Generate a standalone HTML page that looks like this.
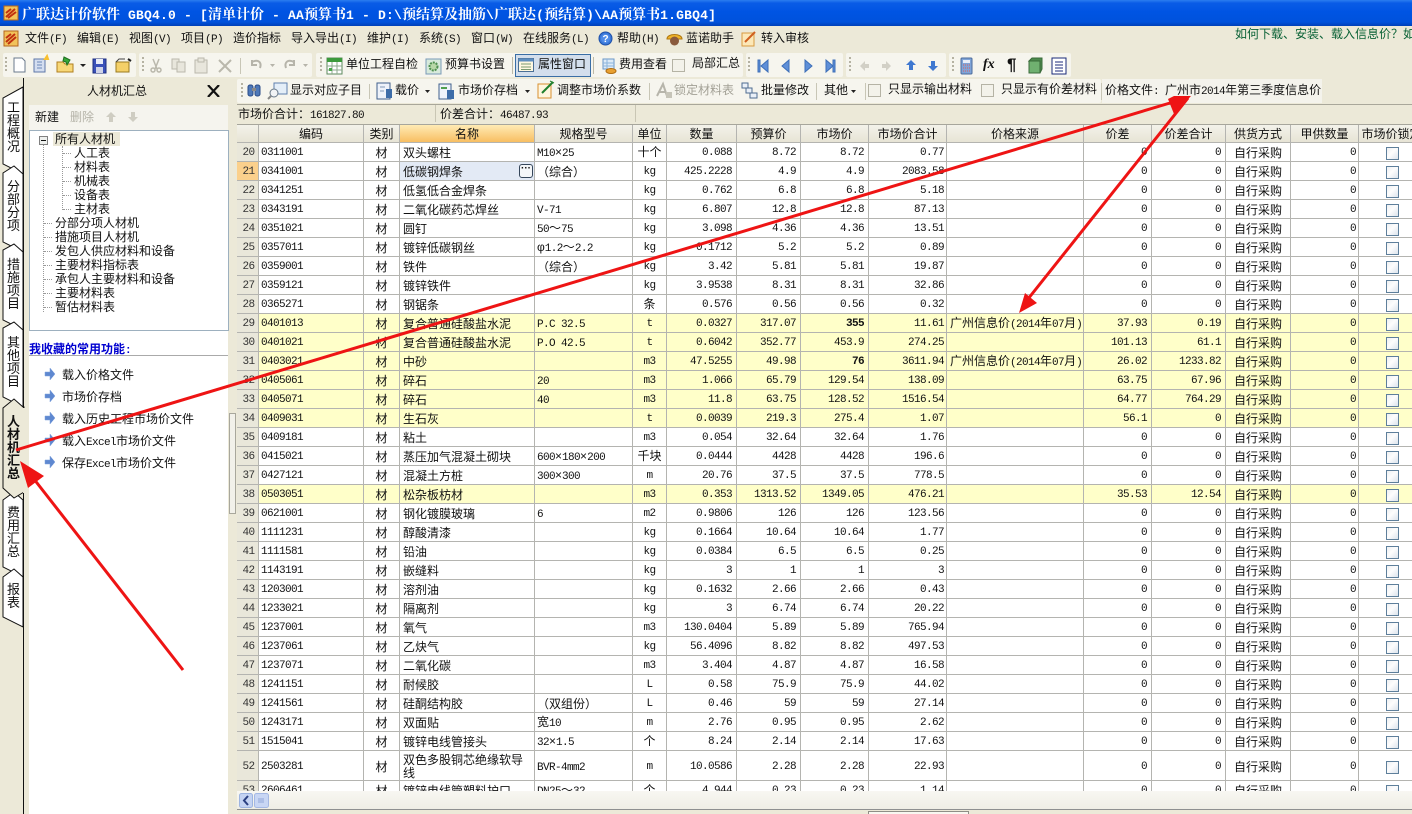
<!DOCTYPE html>
<html lang="zh"><head><meta charset="utf-8"><title>广联达计价软件</title>
<style>
html,body{margin:0;padding:0;width:1412px;height:814px;overflow:hidden;background:#ECE9D8}
body{position:relative;font:12px/14px "Liberation Sans","WenQuanYi Zen Hei","Noto Sans CJK SC",sans-serif;color:#111}
.a{position:absolute;white-space:nowrap}
i{font-style:normal}
.m{font-family:"Liberation Mono","WenQuanYi Zen Hei",monospace;font-size:11px;letter-spacing:-.6px}
.c{font-family:"Liberation Sans","WenQuanYi Zen Hei","Noto Sans CJK SC",sans-serif;font-size:12px;letter-spacing:0}
#title{left:0;top:0;width:1412px;height:26px;background:linear-gradient(#2B7DF0 0,#0A5CE6 3px,#0054E3 12px,#0052DC 22px,#0040B8 26px)}
#tt{left:22px;top:6px;color:#fff;font:bold 14px/16px "Noto Serif CJK SC",serif;letter-spacing:0}
#tt i{font-family:"Liberation Mono",monospace;font-size:13px;letter-spacing:.2px;white-space:pre}
.tb{background:#F6F5EE;border-radius:2px}
.grip{width:2px;background:repeating-linear-gradient(#B5B2A2 0 2px,transparent 2px 4px)}
.sep{width:1px;background:#BDBAA8}
.cb{width:11px;height:11px;border:1px solid #B5B3A5;background:#F3F2EA}
.g{color:#A3A196}
table{border-collapse:separate;border-spacing:0;table-layout:fixed;width:1182px}
#grid{left:237px;top:124px;width:1175px;height:667px;overflow:hidden;background:#fff;border-top:1px solid #A7A69C;box-sizing:border-box}
th,td{box-sizing:border-box;border-right:1px solid #B4B4B0;border-bottom:1px solid #B4B4B0;height:19px;padding:3px 3px 0;overflow:hidden;white-space:nowrap;font-weight:400;line-height:13px}
th{height:18px;background:linear-gradient(#F3F2EA,#E7E4D5);text-align:center;padding:2px 0 0}
th.s{background:linear-gradient(#FFEBB5,#F8BE62)}
td:nth-child(1){background:#E9E7DA;padding:3px 0 0 2px;font-family:"Liberation Mono",monospace;font-size:11px;letter-spacing:-.6px;text-align:center;color:#333}
td:nth-child(2),td:nth-child(7),td:nth-child(8),td:nth-child(9),td:nth-child(10),td:nth-child(12),td:nth-child(13),td:nth-child(15){font-family:"Liberation Mono",monospace;font-size:11px;letter-spacing:-.6px}
td:nth-child(7),td:nth-child(8),td:nth-child(9),td:nth-child(12),td:nth-child(13){text-align:right;padding-right:4px}
td:nth-child(10),td:nth-child(15){text-align:right;padding-right:2px}
td:nth-child(2){padding-left:2px}
td:nth-child(3){text-align:center}
td:nth-child(5){padding-left:2px}
td:nth-child(6){text-align:center;font-family:"Liberation Mono",monospace;font-size:11px;letter-spacing:-.6px}
td:nth-child(4){white-space:normal;padding-right:4px}
td:nth-child(14){text-align:left;padding-left:8px}
td:nth-child(16)::after{content:"";display:block;box-sizing:border-box;width:13px;height:13px;margin-left:24px;border:1px solid #5E7F9B;background:linear-gradient(135deg,#EEF0F2,#FDFDFD 45%,#DCE4EC)}
tr.y td:not(:first-child){background:#FFFFC9}
td.on{background:#E3EAF5!important;position:relative}
td.rs{background:#FBD08C!important}
b.x{font-family:"Liberation Mono",monospace;font-weight:bold}
#dots{position:absolute;left:119px;top:2px;width:14px;height:14px;box-sizing:border-box;border:1px solid #35465A;border-radius:3px;background:#F4F6F8;font:bold 10px/8px "Liberation Sans",sans-serif;text-align:center;letter-spacing:0}
.v{position:absolute;left:6px;width:15px;text-align:center;font-size:13px;line-height:13px;white-space:normal}
.tree{font-size:12px;line-height:14px}
.ln{position:absolute;border-left:1px dotted #999}
.lh{position:absolute;border-top:1px dotted #999;width:8px;height:0}
</style></head><body>

<div class="a" id="title"></div>
<svg class="a" style="left:3px;top:4px" width="16" height="18" viewBox="0 0 16 18"><rect x="1" y="2" width="14" height="14" fill="#F2C25A" stroke="#B5651D"/><path d="M3 13L12 5M5 14L13 8M3 9L8 5" stroke="#C03010" stroke-width="2" fill="none"/></svg>
<div class="a" id="tt">广联达计价软件<i> GBQ4.0 - [</i>清单计价<i> - AA</i>预算书<i>1 - D:\</i>预结算及抽筋<i>\</i>广联达<i>(</i>预结算<i>)\AA</i>预算书<i>1.GBQ4]</i></div>

<!-- menu -->
<svg class="a" style="left:3px;top:30px" width="16" height="17" viewBox="0 0 16 17"><rect x="1" y="1" width="14" height="15" fill="#F2C25A" stroke="#B5651D"/><path d="M3 12L12 4M5 14L13 7M3 8L8 4" stroke="#C03010" stroke-width="2" fill="none"/></svg>
<span class="a" style="left:25px;top:31px">文件<i class="m">(F)</i></span>
<span class="a" style="left:77px;top:31px">编辑<i class="m">(E)</i></span>
<span class="a" style="left:129px;top:31px">视图<i class="m">(V)</i></span>
<span class="a" style="left:181px;top:31px">项目<i class="m">(P)</i></span>
<span class="a" style="left:233px;top:31px">造价指标</span>
<span class="a" style="left:291px;top:31px">导入导出<i class="m">(I)</i></span>
<span class="a" style="left:367px;top:31px">维护<i class="m">(I)</i></span>
<span class="a" style="left:419px;top:31px">系统<i class="m">(S)</i></span>
<span class="a" style="left:471px;top:31px">窗口<i class="m">(W)</i></span>
<span class="a" style="left:523px;top:31px">在线服务<i class="m">(L)</i></span>
<svg class="a" style="left:598px;top:31px" width="15" height="15" viewBox="0 0 15 15"><circle cx="7.5" cy="7.5" r="6.5" fill="#3A78D8" stroke="#1C4FA8"/><circle cx="7.5" cy="7.5" r="4.5" fill="#4F8CE8"/><text x="7.5" y="11" font-size="10" font-weight="bold" fill="#fff" text-anchor="middle" font-family="Liberation Sans">?</text></svg>
<span class="a" style="left:617px;top:31px">帮助<i class="m">(H)</i></span>
<svg class="a" style="left:666px;top:30px" width="17" height="17" viewBox="0 0 17 17"><path d="M1 9C1 3 16 3 16 9Z" fill="#F0B428" stroke="#B07810"/><circle cx="8.5" cy="11" r="4.5" fill="#8A5A3C"/></svg>
<span class="a" style="left:686px;top:31px">蓝诺助手</span>
<svg class="a" style="left:741px;top:30px" width="16" height="17" viewBox="0 0 16 17"><rect x="1" y="3" width="12" height="13" fill="#FCE8B8" stroke="#D89A40"/><path d="M4 12L14 2" stroke="#D06020" stroke-width="2"/></svg>
<span class="a" style="left:761px;top:31px">转入审核</span>
<span class="a" style="left:1235px;top:27px;color:#0A6236">如何下载、安装、载入信息价？如</span>

<!-- toolbar 1 -->
<div class="a tb" style="left:3px;top:53px;width:133px;height:24px"></div>
<div class="a tb" style="left:139px;top:53px;width:173px;height:24px"></div>
<div class="a tb" style="left:316px;top:53px;width:427px;height:24px"></div>
<div class="a tb" style="left:746px;top:53px;width:97px;height:24px"></div>
<div class="a tb" style="left:846px;top:53px;width:100px;height:24px"></div>
<div class="a tb" style="left:949px;top:53px;width:122px;height:24px"></div>
<div class="a grip" style="left:5px;top:57px;height:16px"></div>
<div class="a grip" style="left:142px;top:57px;height:16px"></div>
<div class="a grip" style="left:320px;top:57px;height:16px"></div>
<div class="a grip" style="left:748px;top:57px;height:16px"></div>
<div class="a grip" style="left:849px;top:57px;height:16px"></div>
<div class="a grip" style="left:952px;top:57px;height:16px"></div>
<svg class="a" style="left:0;top:52px" width="1072" height="26" viewBox="0 0 1072 26">
<path d="M14 6h8l3 3v11H14Z" fill="#fff" stroke="#6B7A8C"/>
<path d="M34 7h11v13H34Z" fill="#D4DEF0" stroke="#5F78A8"/><path d="M37 10h5M37 13h5M37 16h5" stroke="#6C88B8"/><path d="M47 4l-2 3 3 0Z" fill="#F8C030" stroke="#F8C030" stroke-width="2"/>
<path d="M57 20V10h6l2 2h8v8Z" fill="#F8D878" stroke="#B08020"/><path d="M64 5l6 3-3 5-1-3-3-1Z" fill="#38A838" stroke="#207020"/>
<path d="M80 12h6l-3 3Z" fill="#222"/>
<path d="M93 7h13v14H93Z" fill="#3A50B8" stroke="#1F2F80"/><rect x="96" y="7" width="7" height="5" fill="#E8ECF8"/><rect x="96" y="15" width="7" height="6" fill="#D0D4E8"/>
<path d="M116 20V10h13v10Z" fill="#F4D068" stroke="#9A7A20"/><path d="M116 10l3-3h6" fill="none" stroke="#444"/><path d="M128 7l3 2" stroke="#222" stroke-width="2"/>
<g fill="none" stroke="#BAB8AC" stroke-width="1.5"><path d="M153 7l4 10M159 7l-4 10"/><circle cx="153" cy="18" r="2"/><circle cx="159" cy="18" r="2"/></g>
<g fill="#E8E6DC" stroke="#BAB8AC"><path d="M172 7h7v10h-7Z"/><path d="M177 10h8v10h-8Z"/><path d="M195 8h12v13h-12Z"/><rect x="198" y="6" width="6" height="4"/></g>
<path d="M219 8l12 12M231 8l-12 12" stroke="#BAB8AC" stroke-width="2"/>
<rect x="240" y="6" width="1" height="16" fill="#C8C6B6"/>
<path d="M252 10c6-3 10 0 8 6M252 8v5h5" fill="none" stroke="#B6B4AA" stroke-width="2"/><path d="M270 12h5l-2.500 3Z" fill="#B6B4AA"/>
<path d="M294 10c-6-3-10 0-8 6M294 8v5h-5" fill="none" stroke="#B6B4AA" stroke-width="2"/><path d="M303 12h5l-2.500 3Z" fill="#B6B4AA"/>
<rect x="327" y="6" width="15" height="16" fill="#fff" stroke="#5E8A5E"/><rect x="327" y="6" width="15" height="4" fill="#3C9A3C"/><path d="M327 14h15M327 18h15M332 10v12M337 10v12" stroke="#8EA88E"/><path d="M329 16h3v3h-3Z" fill="#48A848"/>
<rect x="426" y="7" width="15" height="15" fill="#D8EADC" stroke="#7A9AB8"/><circle cx="433.500" cy="14.500" r="4" fill="#B8D8A8" stroke="#4F9050" stroke-dasharray="2 1" stroke-width="2"/>
<rect x="603" y="7" width="11" height="10" fill="#DDEAF6" stroke="#6A98C8"/><path d="M603 11h11M603 14h11M607 7v10" stroke="#8CB4DC"/><ellipse cx="611" cy="19" rx="5" ry="2.500" fill="#E8A030" stroke="#B06C10"/>
<g fill="#5E8FD8" stroke="#3E6FB8"><path d="M758 8h2v12h-2Z"/><path d="M768 8v12l-7-6Z"/><path d="M789 8v12l-7-6Z"/><path d="M805 8l7 6-7 6Z"/><path d="M826 8l7 6-7 6Z"/><path d="M833 8h2v12h-2Z"/></g>
<g fill="#D2D0C6"><path d="M860 14l5-5v3h4v4h-4v3Z"/><path d="M891 14l-5-5v3h-4v4h4v3Z"/></g>
<g fill="#3F78D0"><path d="M911 8l5 5h-3v5h-4v-5h-3Z"/><path d="M933 19l5-5h-3v-5h-4v5h-3Z"/></g>
<rect x="961" y="6" width="11" height="16" rx="1" fill="#7FA4D8" stroke="#4C6C9C"/><rect x="963" y="8" width="7" height="3" fill="#E8EEF8"/><path d="M963 13h7M963 16h7M963 19h7" stroke="#D86060" stroke-dasharray="1 1"/>
<rect x="1029" y="9" width="11" height="12" fill="#70B070" stroke="#3A6A3A"/><path d="M1029 9l3-3h10v11l-2 4V9Z" fill="#4C8A4C" stroke="#3A6A3A"/>
<rect x="1052" y="6" width="14" height="16" fill="#fff" stroke="#1B2A78"/><path d="M1055 10h8M1055 13h8M1055 16h8M1055 19h8" stroke="#1B2A78"/>
</svg>
<span class="a" style="left:983px;top:57px;font:italic bold 14px/16px 'Liberation Serif',serif">fx</span>
<span class="a" style="left:1007px;top:57px;font:bold 17px/16px 'Liberation Sans',sans-serif">¶</span>
<span class="a" style="left:346px;top:57px">单位工程自检</span>
<span class="a" style="left:445px;top:57px">预算书设置</span>
<div class="a" style="left:515px;top:54px;width:74px;height:21px;background:#D3DEEC;border:1px solid #3A6EA5"></div>
<svg class="a" style="left:518px;top:57px" width="16" height="16" viewBox="0 0 16 16"><rect x=".5" y="1.500" width="15" height="13" fill="#FFF8E0" stroke="#4B6F95"/><rect x=".5" y="1.500" width="15" height="3" fill="#5D8EC0"/><path d="M3 7h10M3 10h10M3 12.500h10" stroke="#7A9A70"/></svg>
<span class="a" style="left:538px;top:57px">属性窗口</span>
<div class="a sep" style="left:512px;top:57px;height:17px"></div>
<div class="a sep" style="left:593px;top:57px;height:17px"></div>
<span class="a" style="left:619px;top:57px">费用查看</span>
<div class="a cb" style="left:672px;top:59px"></div>
<span class="a" style="left:692px;top:56px">局部汇总</span>

<!-- toolbar 2 (panel title area) -->
<span class="a" style="left:87px;top:84px">人材机汇总</span>
<svg class="a" style="left:207px;top:85px" width="13" height="12" viewBox="0 0 13 12"><path d="M1 0l11 12M12 0L1 12" stroke="#111" stroke-width="2.200"/></svg>
<div class="a tb" style="left:237px;top:79px;width:864px;height:24px"></div>
<div class="a" style="left:1102px;top:79px;width:220px;height:24px;background:#F4F3EC"></div>
<div class="a grip" style="left:241px;top:83px;height:16px"></div>
<svg class="a" style="left:236px;top:78px" width="900" height="26" viewBox="0 0 900 26">
<g fill="#4E78B8" stroke="#2A4C88"><rect x="12" y="7" width="5" height="11" rx="2"/><rect x="19" y="7" width="5" height="11" rx="2"/></g><rect x="16" y="10" width="4" height="3" fill="#888"/>
<rect x="38" y="5" width="13" height="11" fill="#E4EEF8" stroke="#5F80AE"/><circle cx="38" cy="15" r="4" fill="#F2F4F6" stroke="#687888"/><path d="M35 18l-3 3" stroke="#888" stroke-width="2"/>
<rect x="133" y="6" width="1" height="15" fill="#C8C6B6"/>
<rect x="141" y="5" width="13" height="16" fill="#EEF2FA" stroke="#40608C"/><rect x="150" y="11" width="6" height="9" fill="#3D6CA8"/><path d="M144 9h5M144 13h4" stroke="#8098B8"/>
<path d="M189 12h5l-2.500 3Z" fill="#222"/>
<rect x="203" y="6" width="12" height="15" fill="#EEF2FA" stroke="#40608C"/><rect x="211" y="12" width="7" height="9" fill="#3D6CA8"/><path d="M205 10h6" stroke="#50A050" stroke-width="2"/>
<path d="M289 12h5l-2.500 3Z" fill="#222"/>
<rect x="302" y="6" width="13" height="14" fill="#FFF6DE" stroke="#D89030"/><path d="M306 15l11-11" stroke="#20802C" stroke-width="2"/><path d="M314 3l4 2" stroke="#20802C"/>
<rect x="413" y="5" width="1" height="17" fill="#C8C6B6"/>
<path d="M421 18l6-12 4 12M423 14h6" fill="none" stroke="#B7B5AB" stroke-width="2"/><rect x="430" y="14" width="6" height="6" fill="#C6C4B8"/>
<g fill="#EAF0F8" stroke="#4F6C90"><rect x="506" y="5" width="6" height="5"/><rect x="510" y="10" width="6" height="5"/><rect x="514" y="15" width="7" height="5"/></g>
<rect x="580" y="5" width="1" height="17" fill="#C8C6B6"/>
<path d="M615 12h5l-2.500 3Z" fill="#222"/>
<rect x="629" y="5" width="1" height="17" fill="#C8C6B6"/>
<rect x="865" y="5" width="1" height="17" fill="#C8C6B6"/>
</svg>
<span class="a" style="left:290px;top:83px">显示对应子目</span>
<span class="a" style="left:395px;top:83px">载价</span>
<span class="a" style="left:458px;top:83px">市场价存档</span>
<span class="a" style="left:557px;top:83px">调整市场价系数</span>
<span class="a g" style="left:674px;top:83px">锁定材料表</span>
<span class="a" style="left:761px;top:83px">批量修改</span>
<span class="a" style="left:824px;top:83px">其他</span>
<div class="a cb" style="left:868px;top:84px"></div>
<span class="a" style="left:888px;top:82px">只显示输出材料</span>
<div class="a cb" style="left:981px;top:84px"></div>
<span class="a" style="left:1001px;top:82px">只显示有价差材料</span>
<span class="a" style="left:1105px;top:83px">价格文件<i class="m">: </i> 广州市<i class="m">2014</i>年第三季度信息价</span>

<!-- summary -->
<div class="a" style="left:237px;top:104px;width:1175px;height:1px;background:#A9A79A"></div>
<span class="a" style="left:238px;top:107px">市场价合计：<i class="m">161827.80</i></span>
<div class="a" style="left:435px;top:105px;width:1px;height:17px;background:#C9C6B4"></div>
<span class="a" style="left:440px;top:107px">价差合计：<i class="m">46487.93</i></span>
<div class="a" style="left:635px;top:105px;width:1px;height:17px;background:#C9C6B4"></div>

<!-- left tabs -->
<svg class="a" style="left:0;top:78px" width="29" height="736" viewBox="0 0 29 736">
<rect x="24" y="0" width="5" height="736" fill="#ECE9D8"/>
<g fill="#fff" stroke="#111" stroke-width="1">
<path d="M23 9L3 20V86L23 96Z"/>
<path d="M23 96L14 88L3 95V164L23 174Z"/>
<path d="M23 174L14 166L3 172V242L23 252Z"/>
<path d="M23 252L14 244L3 250V319L23 329Z"/>
<path d="M23 422L14 414L3 422V489L23 499Z"/>
<path d="M23 499L14 491L3 499V539L23 549Z"/>
</g>
<path d="M23 329L14 321L3 330V410L14 420L24 414V329Z" fill="#ECE9D8" stroke="#111"/>
<path d="M23.500 0V736" stroke="#111" stroke-width="1"/>
<rect x="23" y="330" width="2" height="85" fill="#ECE9D8"/>
</svg>
<div class="v" style="top:101px">工<br>程<br>概<br>况</div>
<div class="v" style="top:180px">分<br>部<br>分<br>项</div>
<div class="v" style="top:258px">措<br>施<br>项<br>目</div>
<div class="v" style="top:336px">其<br>他<br>项<br>目</div>
<div class="v" style="top:415px;font-weight:bold">人<br>材<br>机<br>汇<br>总</div>
<div class="v" style="top:506px">费<br>用<br>汇<br>总</div>
<div class="v" style="top:583px">报<br>表</div>

<!-- left panel -->
<div class="a" style="left:29px;top:105px;width:199px;height:25px;background:#F5F4EE"></div>
<span class="a" style="left:35px;top:110px">新建</span>
<span class="a g" style="left:70px;top:110px;color:#B5B3A8">删除</span>
<svg class="a" style="left:103px;top:110px" width="36" height="14" viewBox="0 0 36 14"><path d="M8 2l5 5h-3v5H6V7H3Z" fill="#CFCDC2"/><path d="M30 12l5-5h-3V2h-4v5h-3Z" fill="#CFCDC2"/></svg>
<div class="a" style="left:29px;top:130px;width:198px;height:199px;background:#fff;border:1px solid #9DB0BF"></div>
<div class="a" style="left:29px;top:331px;width:199px;height:483px;background:#fff"></div>
<div class="a" style="left:53px;top:132px;width:67px;height:14px;background:#ECE9D8"></div>
<div class="ln" style="left:43px;top:145px;height:167px"></div>
<div class="ln" style="left:62px;top:146px;height:64px"></div>
<div class="lh" style="left:63px;top:153px"></div><div class="lh" style="left:63px;top:167px"></div><div class="lh" style="left:63px;top:181px"></div><div class="lh" style="left:63px;top:195px"></div><div class="lh" style="left:63px;top:209px"></div>
<div class="lh" style="left:44px;top:223px"></div><div class="lh" style="left:44px;top:237px"></div><div class="lh" style="left:44px;top:251px"></div><div class="lh" style="left:44px;top:265px"></div><div class="lh" style="left:44px;top:279px"></div><div class="lh" style="left:44px;top:293px"></div><div class="lh" style="left:44px;top:307px"></div>
<svg class="a" style="left:39px;top:136px" width="9" height="9" viewBox="0 0 9 9"><rect x=".5" y=".5" width="8" height="8" fill="#EEF0EE" stroke="#808080"/><path d="M2 4.500h5" stroke="#111"/></svg>
<span class="a tree" style="left:55px;top:132px">所有人材机</span>
<span class="a tree" style="left:74px;top:146px">人工表</span>
<span class="a tree" style="left:74px;top:160px">材料表</span>
<span class="a tree" style="left:74px;top:174px">机械表</span>
<span class="a tree" style="left:74px;top:188px">设备表</span>
<span class="a tree" style="left:74px;top:202px">主材表</span>
<span class="a tree" style="left:55px;top:216px">分部分项人材机</span>
<span class="a tree" style="left:55px;top:230px">措施项目人材机</span>
<span class="a tree" style="left:55px;top:244px">发包人供应材料和设备</span>
<span class="a tree" style="left:55px;top:258px">主要材料指标表</span>
<span class="a tree" style="left:55px;top:272px">承包人主要材料和设备</span>
<span class="a tree" style="left:55px;top:286px">主要材料表</span>
<span class="a tree" style="left:55px;top:300px">暂估材料表</span>
<span class="a" style="left:29px;top:342px;color:#0000D0;font-weight:bold">我收藏的常用功能<i class="m" style="font-weight:bold">:</i></span>
<div class="a" style="left:29px;top:355px;width:199px;height:1px;background:#AAA"></div>
<svg class="a" style="left:44px;top:367px" width="11" height="104" viewBox="0 0 11 104"><g fill="#5E88D0" stroke="#7DA0DC" stroke-width=".5"><path d="M1 5h5V1l5 6-5 6V9H1Z"/><path d="M1 27h5v-4l5 6-5 6v-4H1Z"/><path d="M1 49h5v-4l5 6-5 6v-4H1Z"/><path d="M1 71h5v-4l5 6-5 6v-4H1Z"/><path d="M1 93h5v-4l5 6-5 6v-4H1Z"/></g></svg>
<span class="a" style="left:62px;top:368px">载入价格文件</span>
<span class="a" style="left:62px;top:390px">市场价存档</span>
<span class="a" style="left:62px;top:412px">载入历史工程市场价文件</span>
<span class="a" style="left:62px;top:434px">载入<i class="m">Excel</i>市场价文件</span>
<span class="a" style="left:62px;top:456px">保存<i class="m">Excel</i>市场价文件</span>
<div class="a" style="left:229px;top:413px;width:5px;height:99px;background:#F2F1EA;border:1px solid #A8A79C"></div>

<!-- grid -->
<div class="a" id="grid"><table>
<colgroup><col style="width:22px"><col style="width:105px"><col style="width:36px"><col style="width:135px"><col style="width:98px"><col style="width:34px"><col style="width:70px"><col style="width:64px"><col style="width:68px"><col style="width:78px"><col style="width:137px"><col style="width:68px"><col style="width:74px"><col style="width:65px"><col style="width:68px"><col style="width:66px"></colgroup>
<tr><th><th>编码<th>类别<th class="s">名称<th>规格型号<th>单位<th>数量<th>预算价<th>市场价<th>市场价合计<th>价格来源<th>价差<th>价差合计<th>供货方式<th>甲供数量<th>市场价锁定
<tr><td>20<td>0311001<td>材<td>双头螺柱<td><i class="m">M10</i>×<i class="m">25</i><td><i class="c">十个</i><td>0.088<td>8.72<td>8.72<td>0.77<td><td>0<td>0<td>自行采购<td>0<td>
<tr><td class="rs">21<td>0341001<td>材<td class="on" style="overflow:visible">低碳钢焊条<span id="dots">···</span><td>（综合）<td>kg<td>425.2228<td>4.9<td>4.9<td>2083.58<td><td>0<td>0<td>自行采购<td>0<td>
<tr><td>22<td>0341251<td>材<td>低氢低合金焊条<td><td>kg<td>0.762<td>6.8<td>6.8<td>5.18<td><td>0<td>0<td>自行采购<td>0<td>
<tr><td>23<td>0343191<td>材<td>二氧化碳药芯焊丝<td><i class="m">V-71</i><td>kg<td>6.807<td>12.8<td>12.8<td>87.13<td><td>0<td>0<td>自行采购<td>0<td>
<tr><td>24<td>0351021<td>材<td>圆钉<td><i class="m">50</i>～<i class="m">75</i><td>kg<td>3.098<td>4.36<td>4.36<td>13.51<td><td>0<td>0<td>自行采购<td>0<td>
<tr><td>25<td>0357011<td>材<td>镀锌低碳钢丝<td>φ<i class="m">1.2</i>～<i class="m">2.2</i><td>kg<td>0.1712<td>5.2<td>5.2<td>0.89<td><td>0<td>0<td>自行采购<td>0<td>
<tr><td>26<td>0359001<td>材<td>铁件<td>（综合）<td>kg<td>3.42<td>5.81<td>5.81<td>19.87<td><td>0<td>0<td>自行采购<td>0<td>
<tr><td>27<td>0359121<td>材<td>镀锌铁件<td><td>kg<td>3.9538<td>8.31<td>8.31<td>32.86<td><td>0<td>0<td>自行采购<td>0<td>
<tr><td>28<td>0365271<td>材<td>钢锯条<td><td><i class="c">条</i><td>0.576<td>0.56<td>0.56<td>0.32<td><td>0<td>0<td>自行采购<td>0<td>
<tr class="y"><td>29<td>0401013<td>材<td>复合普通硅酸盐水泥<td><i class="m">P.C 32.5</i><td>t<td>0.0327<td>317.07<td><b class="x">355</b><td>11.61<td>广州信息价<i class="m">(2014</i>年<i class="m">07</i>月<i class="m">)</i><td>37.93<td>0.19<td>自行采购<td>0<td>
<tr class="y"><td>30<td>0401021<td>材<td>复合普通硅酸盐水泥<td><i class="m">P.O 42.5</i><td>t<td>0.6042<td>352.77<td>453.9<td>274.25<td><td>101.13<td>61.1<td>自行采购<td>0<td>
<tr class="y"><td>31<td>0403021<td>材<td>中砂<td><td>m3<td>47.5255<td>49.98<td><b class="x">76</b><td>3611.94<td>广州信息价<i class="m">(2014</i>年<i class="m">07</i>月<i class="m">)</i><td>26.02<td>1233.82<td>自行采购<td>0<td>
<tr class="y"><td>32<td>0405061<td>材<td>碎石<td><i class="m">20</i><td>m3<td>1.066<td>65.79<td>129.54<td>138.09<td><td>63.75<td>67.96<td>自行采购<td>0<td>
<tr class="y"><td>33<td>0405071<td>材<td>碎石<td><i class="m">40</i><td>m3<td>11.8<td>63.75<td>128.52<td>1516.54<td><td>64.77<td>764.29<td>自行采购<td>0<td>
<tr class="y"><td>34<td>0409031<td>材<td>生石灰<td><td>t<td>0.0039<td>219.3<td>275.4<td>1.07<td><td>56.1<td>0<td>自行采购<td>0<td>
<tr><td>35<td>0409181<td>材<td>粘土<td><td>m3<td>0.054<td>32.64<td>32.64<td>1.76<td><td>0<td>0<td>自行采购<td>0<td>
<tr><td>36<td>0415021<td>材<td>蒸压加气混凝土砌块<td><i class="m">600</i>×<i class="m">180</i>×<i class="m">200</i><td><i class="c">千块</i><td>0.0444<td>4428<td>4428<td>196.6<td><td>0<td>0<td>自行采购<td>0<td>
<tr><td>37<td>0427121<td>材<td>混凝土方桩<td><i class="m">300</i>×<i class="m">300</i><td>m<td>20.76<td>37.5<td>37.5<td>778.5<td><td>0<td>0<td>自行采购<td>0<td>
<tr class="y"><td>38<td>0503051<td>材<td>松杂板枋材<td><td>m3<td>0.353<td>1313.52<td>1349.05<td>476.21<td><td>35.53<td>12.54<td>自行采购<td>0<td>
<tr><td>39<td>0621001<td>材<td>钢化镀膜玻璃<td><i class="m">6</i><td>m2<td>0.9806<td>126<td>126<td>123.56<td><td>0<td>0<td>自行采购<td>0<td>
<tr><td>40<td>1111231<td>材<td>醇酸清漆<td><td>kg<td>0.1664<td>10.64<td>10.64<td>1.77<td><td>0<td>0<td>自行采购<td>0<td>
<tr><td>41<td>1111581<td>材<td>铅油<td><td>kg<td>0.0384<td>6.5<td>6.5<td>0.25<td><td>0<td>0<td>自行采购<td>0<td>
<tr><td>42<td>1143191<td>材<td>嵌缝料<td><td>kg<td>3<td>1<td>1<td>3<td><td>0<td>0<td>自行采购<td>0<td>
<tr><td>43<td>1203001<td>材<td>溶剂油<td><td>kg<td>0.1632<td>2.66<td>2.66<td>0.43<td><td>0<td>0<td>自行采购<td>0<td>
<tr><td>44<td>1233021<td>材<td>隔离剂<td><td>kg<td>3<td>6.74<td>6.74<td>20.22<td><td>0<td>0<td>自行采购<td>0<td>
<tr><td>45<td>1237001<td>材<td>氧气<td><td>m3<td>130.0404<td>5.89<td>5.89<td>765.94<td><td>0<td>0<td>自行采购<td>0<td>
<tr><td>46<td>1237061<td>材<td>乙炔气<td><td>kg<td>56.4096<td>8.82<td>8.82<td>497.53<td><td>0<td>0<td>自行采购<td>0<td>
<tr><td>47<td>1237071<td>材<td>二氧化碳<td><td>m3<td>3.404<td>4.87<td>4.87<td>16.58<td><td>0<td>0<td>自行采购<td>0<td>
<tr><td>48<td>1241151<td>材<td>耐候胶<td><td>L<td>0.58<td>75.9<td>75.9<td>44.02<td><td>0<td>0<td>自行采购<td>0<td>
<tr><td>49<td>1241561<td>材<td>硅酮结构胶<td>（双组份）<td>L<td>0.46<td>59<td>59<td>27.14<td><td>0<td>0<td>自行采购<td>0<td>
<tr><td>50<td>1243171<td>材<td>双面贴<td>宽<i class="m">10</i><td>m<td>2.76<td>0.95<td>0.95<td>2.62<td><td>0<td>0<td>自行采购<td>0<td>
<tr><td>51<td>1515041<td>材<td>镀锌电线管接头<td><i class="m">32</i>×<i class="m">1.5</i><td><i class="c">个</i><td>8.24<td>2.14<td>2.14<td>17.63<td><td>0<td>0<td>自行采购<td>0<td>
<tr style="height:29px"><td>52<td>2503281<td>材<td>双色多股铜芯绝缘软导线<td><i class="m">BVR-4mm2</i><td>m<td>10.0586<td>2.28<td>2.28<td>22.93<td><td>0<td>0<td>自行采购<td>0<td>
<tr><td>53<td>2606461<td>材<td>镀锌电线管塑料护口<td><i class="m">DN25</i>～<i class="m">32</i><td><i class="c">个</i><td>4.944<td>0.23<td>0.23<td>1.14<td><td>0<td>0<td>自行采购<td>0<td>
</table></div>

<!-- bottom scrollbar -->
<div class="a" style="left:237px;top:791px;width:1175px;height:18px;background:linear-gradient(#F8F7F2,#EFEEE5);border-bottom:1px solid #8E9090"></div>
<svg class="a" style="left:239px;top:793px" width="32" height="16" viewBox="0 0 32 16"><rect x=".5" y=".5" width="13" height="14" rx="2" fill="#C4D3F2" stroke="#9DB4E0"/><path d="M9 3L5 7.500 9 12" fill="none" stroke="#2A3F80" stroke-width="2"/><rect x="15.500" y=".5" width="14" height="14" rx="2" fill="#C8D6F4" stroke="#A4B8E4"/><path d="M20 5v5M22 5v5M24 5v5" stroke="#8FA6D8"/></svg>
<div class="a" style="left:868px;top:811px;width:99px;height:3px;background:#F8F7F0;border:1px solid #8E8E86;border-bottom:0"></div>

<!-- arrows -->
<svg class="a" style="left:0;top:0;z-index:5" width="1412" height="814" viewBox="0 0 1412 814">
<g stroke="#EE1414" stroke-width="3" fill="#EE1414">
<path d="M16 450L1170 103" fill="none"/>
<path d="M1024 304L1188 98" fill="none"/>
<path d="M183 670L30 474" fill="none"/>
</g>
<g fill="#EE1414">
<path d="M1191 96L1174 114 1168 99 1174 96Z"/>
<path d="M1019 313L1025 293 1037 303Z"/>
<path d="M20 461L44 476 28 488Z"/>
</g>
</svg>
</body></html>
